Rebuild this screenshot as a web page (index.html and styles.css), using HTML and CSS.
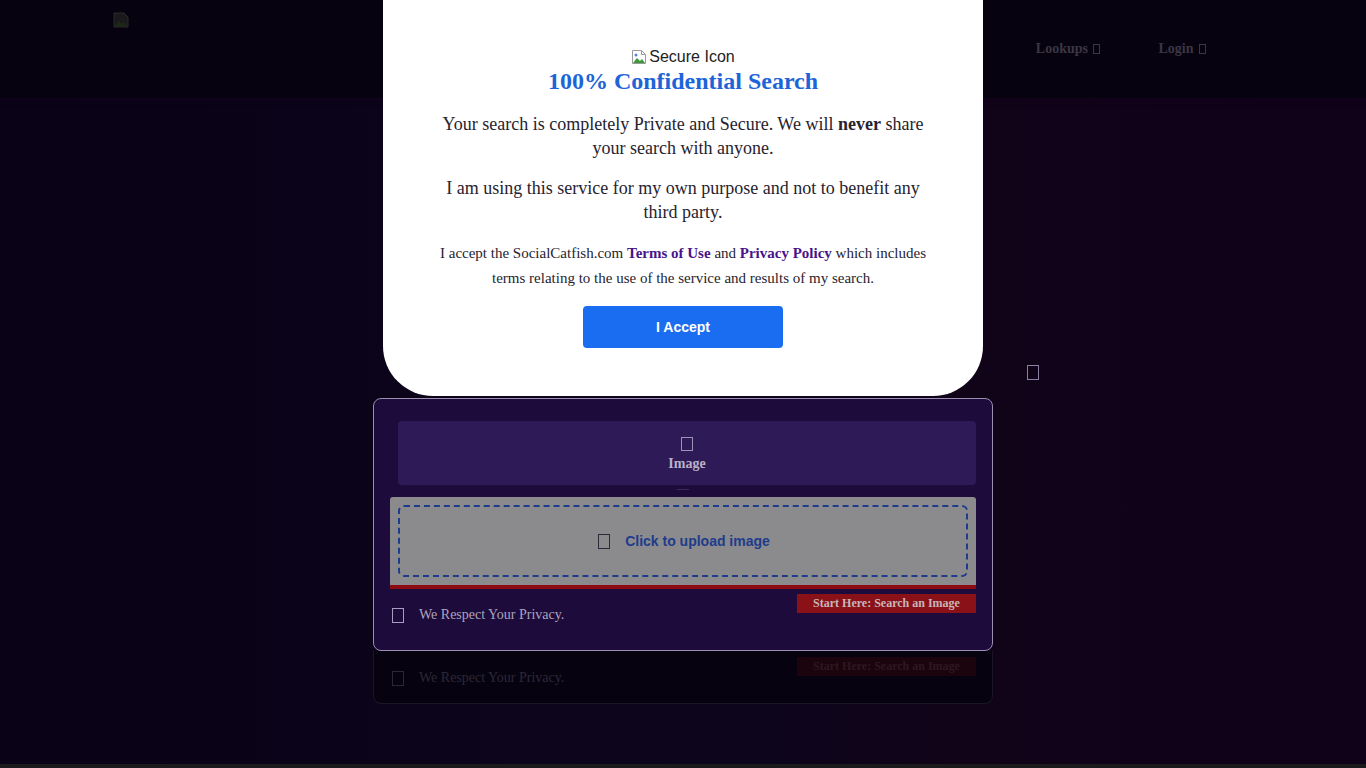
FILE: index.html
```html
<!DOCTYPE html>
<html lang="en">
<head>
    <meta charset="UTF-8" />
    <meta name="viewport" content="width=device-width, initial-scale=1" />
    <title>Reverse Image Search</title>
    <link rel="stylesheet" href="styles.css">
</head>
<body>

<header class="site-header">
    <div class="logo">
        <svg class="broken-img" width="16" height="16" viewBox="0 0 16 16">
            <path d="M1 1h10l4 4v10H1z" fill="#1a1a1c" stroke="#2a2a2c"/>
            <path d="M2 14l4-5 3 3 2-2 3 4z" fill="#1c2a14"/>
        </svg>
    </div>
    <nav class="nav">
        <a class="nav-link">Lookups <span class="glyph small"></span></a>
        <a class="nav-link">Login <span class="glyph small"></span></a>
    </nav>
</header>

<main class="hero">
    <div class="hero-side"><span class="glyph"></span></div>

    <div class="search-card">
        <div class="tab">
            <span class="glyph"></span>
            <span class="tab-label">Image</span>
        </div>
        <div class="tab-marker"></div>

        <div class="upload">
            <div class="upload-drop">
                <span class="glyph dark"></span>
                <span class="upload-text">Click to upload image</span>
            </div>
        </div>

        <div class="card-foot">
            <div class="privacy"><span class="glyph"></span>We Respect Your Privacy.</div>
            <div class="badge">Start Here: Search an Image</div>
        </div>
    </div>

    <div class="card-ghost">
        <div class="card-foot">
            <div class="privacy"><span class="glyph"></span>We Respect Your Privacy.</div>
            <div class="badge">Start Here: Search an Image</div>
        </div>
    </div>
</main>

<div class="bottom-strip"></div>

<div class="modal">
    <div class="secure">
        <svg class="broken-img" width="16" height="16" viewBox="0 0 16 16">
            <path d="M1.5 1.5h9l4 4v9h-13z" fill="#fff" stroke="#9a9a9a"/>
            <path d="M10.5 1.5v4h4" fill="none" stroke="#9a9a9a"/>
            <path d="M2 14l4-5 3 3 2-2 3 4z" fill="#3d9a3a"/>
            <circle cx="5" cy="6" r="1.5" fill="#4a8ad8"/>
        </svg>
        <span class="secure-alt">Secure Icon</span>
    </div>
    <h2 class="modal-title">100% Confidential Search</h2>
    <p class="modal-text">Your search is completely Private and Secure. We will <b>never</b> share your search with anyone.</p>
    <p class="modal-text second">I am using this service for my own purpose and not to benefit any third party.</p>
    <p class="modal-terms">I accept the SocialCatfish.com <a>Terms of Use</a> and <a>Privacy Policy</a> which includes terms relating to the use of the service and results of my search.</p>
    <button class="accept">I Accept</button>
</div>

</body>
</html>
```

FILE: styles.css
```css
body {
    margin: 0;
    height: 100vh;
    overflow: hidden;
    background: linear-gradient(90deg, #0a0317 0%, #0c051c 55%, #110318 70%, #0f0219 100%);
    font-family: "Liberation Serif", "Times New Roman", serif;
    color: #fff;
    position: relative;
}
.site-header {
    height: 98px;
    background: #07020f;
    display: flex;
    justify-content: space-between;
    box-shadow: 0 2px 6px rgba(20, 4, 30, 0.6);
}
.logo {
    padding: 12px 0 0 113px;
}
.broken-img {
    display: block;
}
.nav {
    display: flex;
    gap: 58px;
    padding: 41px 160px 0 0;
}
.nav-link {
    font-size: 14px;
    font-weight: 700;
    color: #3b3644;
}
.glyph {
    display: inline-block;
    width: 10px;
    height: 13px;
    border: 1px solid #a89cc0;
    box-sizing: border-box;
    vertical-align: middle;
}
.glyph.small {
    width: 7px;
    height: 10px;
    margin-left: 2px;
    border-color: #3b3644;
    vertical-align: -1px;
}
.glyph.dark {
    border-color: #2a2a3a;
    width: 12px;
    height: 15px;
}

/* search area */
.hero {
    width: 620px;
    margin: 0 auto;
    padding-top: 266px;
}
.hero-side {
    display: flex;
    justify-content: flex-end;
    margin-right: -46px;
    padding-top: 1px;
    height: 33px;
}
.hero-side .glyph {
    width: 12px;
    height: 15px;
    border-color: #8a80a0;
}
.search-card {
    background: #1c0b3b;
    border: 1px solid #9a8fb0;
    border-radius: 8px;
    padding: 22px 16px 0 16px;
    height: 229px;
}
.tab {
    margin-left: 8px;
    height: 64px;
    background: #2f1a58;
    border-radius: 4px;
    display: flex;
    flex-direction: column;
    align-items: center;
    justify-content: center;
    gap: 5px;
    padding-top: 2px;
    box-sizing: border-box;
}
.tab .glyph {
    width: 12px;
    height: 14px;
    border-color: #9d92b8;
}
.tab-label {
    font-size: 14px;
    font-weight: 700;
    color: #b9b1c9;
}
.tab-marker {
    width: 12px;
    height: 5px;
    margin: 0 auto 7px;
    border-bottom: 1px solid #3a2b5a;
    box-sizing: border-box;
}
.upload {
    background: #8b8a8c;
    border-radius: 3px 3px 0 0;
    border-bottom: 4px solid #8d0b13;
    padding: 8px;
}
.upload-drop {
    height: 72px;
    border: 2px dashed #1e3c8c;
    border-radius: 6px;
    box-sizing: border-box;
    display: flex;
    align-items: center;
    justify-content: center;
    gap: 15px;
}
.upload-drop .glyph {
    margin-left: 2px;
}
.upload-text {
    font-family: "Liberation Sans", Arial, sans-serif;
    font-size: 14px;
    font-weight: 700;
    color: #1e3c8c;
}
.card-foot {
    display: flex;
    justify-content: space-between;
    align-items: flex-start;
    padding-top: 5px;
}
.privacy {
    margin-top: 13px;
    margin-left: 2px;
    font-size: 14px;
    color: #aca4bd;
    display: flex;
    align-items: center;
    gap: 15px;
}
.privacy .glyph {
    width: 12px;
    height: 15px;
    border-color: #a89cc0;
}
.badge {
    width: 179px;
    height: 19px;
    line-height: 19px;
    text-align: center;
    background: #8a1118;
    color: #c7b6ba;
    font-size: 12px;
    font-weight: 700;
}
.card-ghost {
    height: 53px;
    box-sizing: border-box;
    padding: 0 16px;
    background: #070210;
    border: 1px solid #1b1626;
    border-top: none;
    border-radius: 0 0 8px 8px;
}
.card-ghost .card-foot {
    padding-top: 6px;
}
.card-ghost .privacy {
    color: #2c2838;
}
.card-ghost .privacy .glyph {
    border-color: #2c2838;
}
.card-ghost .badge {
    background: #1c040e;
    color: #2e1820;
}
.bottom-strip {
    position: absolute;
    left: 0;
    right: 0;
    bottom: 0;
    height: 4px;
    background: #1b1a1d;
}

/* consent modal */
.modal {
    position: absolute;
    top: 0;
    left: 383px;
    width: 600px;
    box-sizing: border-box;
    padding: 48px 54px 48px;
    background: #fff;
    border-radius: 0 0 50px 50px;
    color: #26232f;
    text-align: center;
}
.secure {
    display: flex;
    justify-content: center;
    align-items: center;
    gap: 2px;
    font-family: "Liberation Sans", Arial, sans-serif;
    font-size: 16px;
    line-height: 18px;
    color: #222;
}
.modal-title {
    margin: 1px 0 0;
    font-size: 24px;
    line-height: 28px;
    color: #1c64d8;
}
.modal-text {
    margin: 17px 0 0;
    font-size: 18px;
    line-height: 24px;
}
.modal-text.second {
    margin-top: 16px;
}
.modal-terms {
    margin: 17px 0 0;
    font-size: 15px;
    line-height: 25px;
}
.modal-terms a {
    font-weight: 700;
    color: #47138a;
}
.accept {
    margin-top: 15px;
    width: 200px;
    height: 42px;
    border: none;
    border-radius: 4px;
    background: #1a6cf0;
    color: #fff;
    font-family: "Liberation Sans", Arial, sans-serif;
    font-size: 14px;
    font-weight: 700;
    cursor: pointer;
}
```
